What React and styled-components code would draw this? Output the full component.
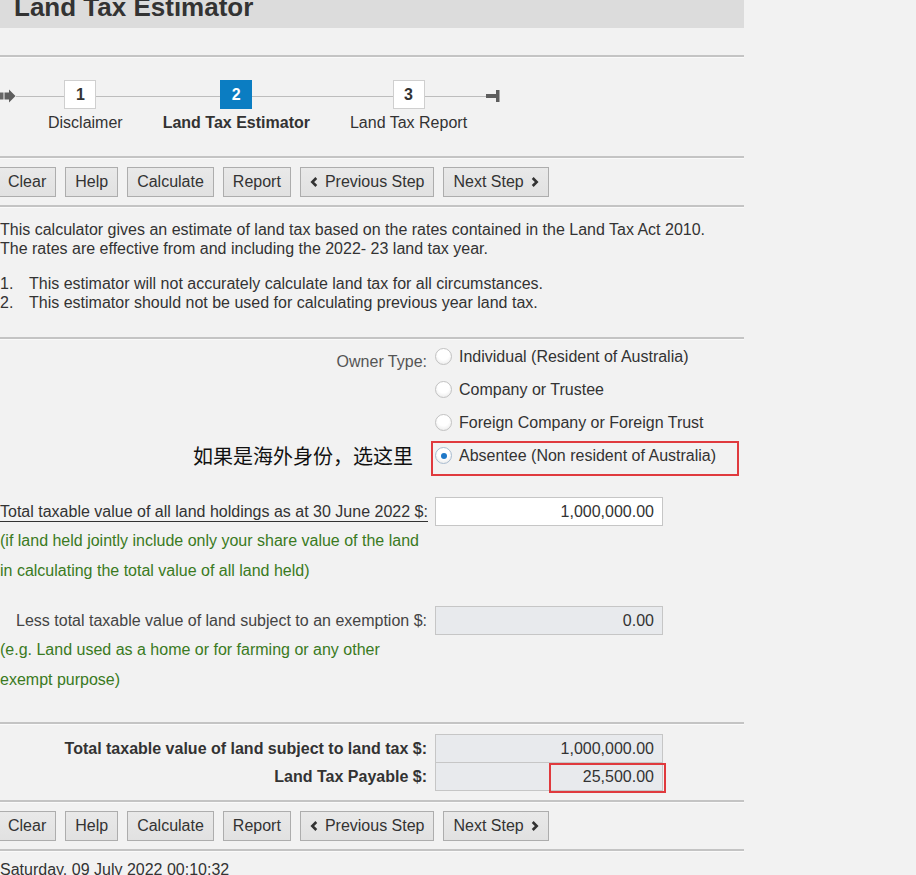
import React from "react";
import styled, { createGlobalStyle } from "styled-components";

const GlobalStyle = createGlobalStyle`
  html, body {
    margin: 0;
    padding: 0;
    background: #f2f2f2;
  }
  body {
    font-family: "Liberation Sans", Arial, sans-serif;
    font-size: 16px;
    color: #333;
    overflow: hidden;
  }
`;

const Page = styled.div`
  width: 744px;
  background: #f2f2f2;
`;

const Header = styled.h1`
  margin: -18px 0 27px;
  height: 46px;
  box-sizing: border-box;
  padding: 10px 0 0 14px;
  background: #dcdcdc;
  font-size: 26px;
  line-height: 30px;
  font-weight: bold;
  color: #333;
`;

const Rule = styled.hr`
  margin: 0;
  height: 0;
  border: none;
  border-top: 2px solid #c4c4c4;
  border-bottom: 1px solid #fafafa;
`;

/* stepper */
const Stepper = styled.div`
  display: flex;
  align-items: flex-start;
  padding: 22px 0 24px;
`;

const Track = styled.div`
  display: flex;
  gap: 40px;
  padding: 0 19px 0 32px;
  background: linear-gradient(#bdbdbd, #bdbdbd) no-repeat 0 16px / 100% 1px;
`;

const Step = styled.div`
  display: flex;
  flex-direction: column;
  align-items: center;
  gap: 4px;
`;

const StepBox = styled.div`
  width: 32px;
  height: 29px;
  box-sizing: border-box;
  display: flex;
  align-items: center;
  justify-content: center;
  margin-right: ${(p) => p.shift || 0}px;
  border: 1px solid ${(p) => (p.active ? "#0b7dc2" : "#cfcfcf")};
  background: ${(p) => (p.active ? "#0b7dc2" : "#fff")};
  color: ${(p) => (p.active ? "#fff" : "#333")};
  font-weight: bold;
  font-size: 16px;
`;

const StepLabel = styled.div`
  line-height: 19px;
  white-space: nowrap;
  font-weight: ${(p) => (p.active ? "bold" : "normal")};
`;

const StartIcon = styled.svg`
  margin-top: 9px;
  flex: none;
`;

const EndIcon = styled.svg`
  margin-top: 10px;
  flex: none;
`;

/* buttons */
const ButtonBar = styled.div`
  display: flex;
  gap: 9px;
  padding: 8px 0;
  margin-left: -2px;
`;

const Button = styled.button`
  height: 30px;
  padding: 0 9px;
  display: inline-flex;
  align-items: center;
  gap: ${(p) => (p.chevronGap ? "7px" : "0")};
  border: 1px solid #adadad;
  border-radius: 0;
  background: linear-gradient(#e9e9e9, #e1e1e1);
  color: #333;
  font-family: "Liberation Sans", Arial, sans-serif;
  font-size: 16px;
  cursor: pointer;
`;

const Chevron = ({ dir }) => (
  <svg width="8" height="10" viewBox="0 0 8 10">
    <polyline
      points={dir === "left" ? "6.3,1 2.3,5 6.3,9" : "1.7,1 5.7,5 1.7,9"}
      fill="none"
      stroke="#333"
      strokeWidth="2.6"
    />
  </svg>
);

/* intro */
const Intro = styled.div`
  padding: 12px 0 25px;
  line-height: 19px;
`;

const Para = styled.p`
  margin: 0 0 16px;
`;

const Notes = styled.ol`
  margin: 0;
  padding: 0;
  list-style: none;
`;

const Note = styled.li`
  display: flex;
`;

const NoteNum = styled.span`
  width: 29px;
  flex: none;
`;

/* form */
const FormGrid = styled.div`
  display: grid;
  grid-template-columns: 427px 228px;
  column-gap: 8px;
  align-items: start;
`;

const OwnerBlock = styled(FormGrid)`
  grid-auto-rows: 33px;
  margin-bottom: 25px;
`;

const SideLabel = styled.div`
  text-align: right;
  color: #555;
  line-height: 19px;
  padding-top: ${(p) => p.pt || 0}px;
`;

const Annotation = styled.div`
  text-align: right;
  padding: 3px 14px 0 0;
  font-family: "Noto Sans CJK SC", sans-serif;
  font-size: 20px;
  line-height: 28px;
  color: #111;
`;

const Option = styled.label`
  position: relative;
  display: flex;
  align-items: center;
  gap: 7px;
  height: 33px;
  white-space: nowrap;
  color: #333;
`;

const Radio = styled.span`
  width: 17px;
  height: 17px;
  box-sizing: border-box;
  flex: none;
  border-radius: 50%;
  border: 1px solid ${(p) => (p.checked ? "#a9bcd0" : "#c2c2c2")};
  background: radial-gradient(circle at 50% 35%, #ffffff 45%, #e4e4e4 100%);
  display: flex;
  align-items: center;
  justify-content: center;

  &::after {
    content: "";
    width: 6px;
    height: 6px;
    border-radius: 50%;
    background: #1f78c8;
    display: ${(p) => (p.checked ? "block" : "none")};
  }
`;

const RedMark = styled.span`
  position: absolute;
  left: -4px;
  top: 2px;
  width: 308px;
  height: 35px;
  box-sizing: border-box;
  border: 2px solid #e03a3e;
  pointer-events: none;
`;

const FieldRow = styled(FormGrid)`
  align-items: center;
`;

const FieldLabel = styled.div`
  text-align: right;
  color: ${(p) => (p.dark ? "#333" : "#444")};
  line-height: 19px;
  white-space: nowrap;
`;

const Underlined = styled.span`
  border-bottom: 1px solid #333;
  padding-bottom: 1px;
`;

const ValueBox = styled.div`
  height: 29px;
  box-sizing: border-box;
  border: 1px solid #c6c6c6;
  background: ${(p) => (p.readOnly ? "#e8eaed" : "#fff")};
  display: flex;
  align-items: center;
  justify-content: flex-end;
  padding-right: 8px;
  color: #333;
  position: relative;
`;

const Hint = styled.div`
  width: 427px;
  color: #3a7a22;
  line-height: 30px;
  margin-bottom: ${(p) => p.mb || 0}px;
`;

/* results */
const Results = styled.div`
  padding: 9px 0 9px;
`;

const ResultRow = styled(FieldRow)`
  & + & {
    margin-top: -1px;
  }
`;

const ResultLabel = styled.div`
  text-align: right;
  font-weight: bold;
  color: #333;
  line-height: 19px;
`;

const PayableMark = styled.span`
  position: absolute;
  right: -4px;
  top: 0;
  width: 117px;
  height: 30px;
  box-sizing: border-box;
  border: 2px solid #e03a3e;
`;

const Footer = styled.div`
  padding-top: 8px;
  line-height: 19px;
  color: #333;
`;

const Actions = () => (
  <ButtonBar>
    <Button>Clear</Button>
    <Button>Help</Button>
    <Button>Calculate</Button>
    <Button>Report</Button>
    <Button chevronGap>
      <Chevron dir="left" />
      Previous Step
    </Button>
    <Button chevronGap>
      Next Step
      <Chevron dir="right" />
    </Button>
  </ButtonBar>
);

const owners = [
  "Individual (Resident of Australia)",
  "Company or Trustee",
  "Foreign Company or Foreign Trust",
  "Absentee (Non resident of Australia)",
];

export default function App() {
  return (
    <Page>
      <GlobalStyle />
      <Header>Land Tax Estimator</Header>
      <Rule />

      <Stepper>
        <StartIcon width="16" height="14" viewBox="0 0 16 14">
          <rect x="0" y="3.5" width="3.5" height="7" fill="#666" />
          <path d="M4.5 3.5 H9 V0.5 L15.5 7 L9 13.5 V10.5 H4.5 Z" fill="#5e5e5e" />
        </StartIcon>
        <Track>
          <Step>
            <StepBox shift={10}>1</StepBox>
            <StepLabel>Disclaimer</StepLabel>
          </Step>
          <Step>
            <StepBox active>2</StepBox>
            <StepLabel active>Land Tax Estimator</StepLabel>
          </Step>
          <Step>
            <StepBox>3</StepBox>
            <StepLabel>Land Tax Report</StepLabel>
          </Step>
        </Track>
        <EndIcon width="14" height="13" viewBox="0 0 14 13">
          <rect x="0" y="4" width="10" height="4" fill="#5e5e5e" />
          <rect x="10" y="0" width="3.5" height="12" fill="#5e5e5e" />
        </EndIcon>
      </Stepper>
      <Rule />

      <Actions />
      <Rule />

      <Intro>
        <Para>
          This calculator gives an estimate of land tax based on the rates contained in the Land Tax Act 2010.
          <br />
          The rates are effective from and including the 2022- 23 land tax year.
        </Para>
        <Notes>
          <Note>
            <NoteNum>1.</NoteNum>This estimator will not accurately calculate land tax for all circumstances.
          </Note>
          <Note>
            <NoteNum>2.</NoteNum>This estimator should not be used for calculating previous year land tax.
          </Note>
        </Notes>
      </Intro>
      <Rule />

      <OwnerBlock>
        <SideLabel pt={12}>Owner Type:</SideLabel>
        <Option>
          <Radio />
          {owners[0]}
        </Option>
        <div />
        <Option>
          <Radio />
          {owners[1]}
        </Option>
        <div />
        <Option>
          <Radio />
          {owners[2]}
        </Option>
        <Annotation>如果是海外身份，选这里</Annotation>
        <Option>
          <Radio checked />
          {owners[3]}
          <RedMark />
        </Option>
      </OwnerBlock>

      <FieldRow>
        <FieldLabel dark>
          <Underlined>Total taxable value of all land holdings as at 30 June 2022 $:</Underlined>
        </FieldLabel>
        <ValueBox>1,000,000.00</ValueBox>
      </FieldRow>
      <Hint mb={20}>
        (if land held jointly include only your share value of the land in calculating the total value of all land held)
      </Hint>

      <FieldRow>
        <FieldLabel>Less total taxable value of land subject to an exemption $:</FieldLabel>
        <ValueBox readOnly>0.00</ValueBox>
      </FieldRow>
      <Hint mb={27}>(e.g. Land used as a home or for farming or any other exempt purpose)</Hint>
      <Rule />

      <Results>
        <ResultRow>
          <ResultLabel>Total taxable value of land subject to land tax $:</ResultLabel>
          <ValueBox readOnly>1,000,000.00</ValueBox>
        </ResultRow>
        <ResultRow>
          <ResultLabel>Land Tax Payable $:</ResultLabel>
          <ValueBox readOnly>
            25,500.00
            <PayableMark />
          </ValueBox>
        </ResultRow>
      </Results>
      <Rule />

      <Actions />
      <Rule />

      <Footer>Saturday, 09 July 2022 00:10:32</Footer>
    </Page>
  );
}
